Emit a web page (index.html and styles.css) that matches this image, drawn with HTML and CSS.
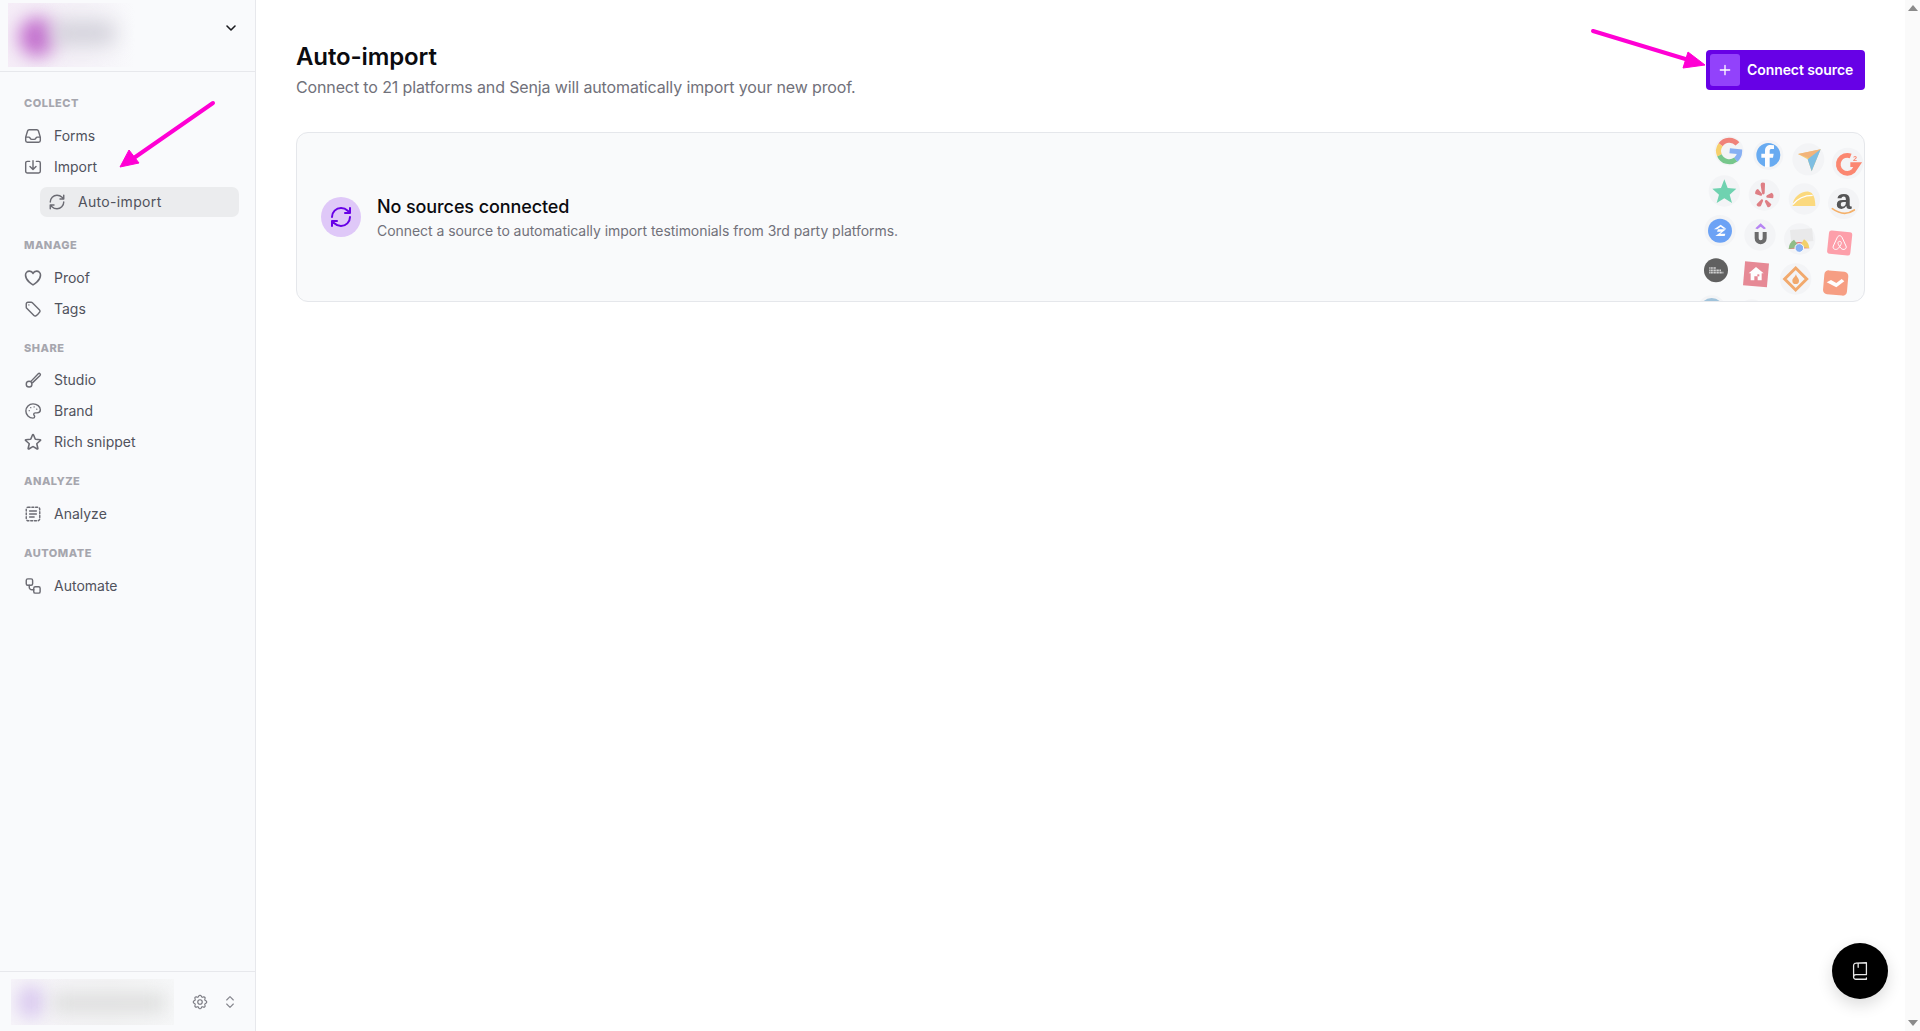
FILE: index.html
```html
<!DOCTYPE html>
<html lang="en">
<head>
<meta charset="utf-8">
<title>Auto-import</title>
<link rel="stylesheet" href="styles.css">
</head>
<body>
<svg class="defs" width="0" height="0" aria-hidden="true">
  <symbol id="i-inbox" viewBox="0 0 24 24"><path d="M2.25 13.5h3.86a2.25 2.25 0 012.012 1.244l.256.512a2.25 2.25 0 002.013 1.244h3.218a2.25 2.25 0 002.013-1.244l.256-.512a2.25 2.25 0 012.013-1.244h3.859m-19.5.338V18a2.25 2.25 0 002.25 2.25h15A2.25 2.25 0 0021.75 18v-4.162c0-.224-.034-.447-.1-.661L19.24 5.338a2.25 2.25 0 00-2.15-1.588H6.911a2.25 2.25 0 00-2.15 1.588L2.35 13.177a2.25 2.25 0 00-.1.661z"/></symbol>
  <symbol id="i-import" viewBox="0 0 24 24"><path d="M7.5 4.5H4.5A2.25 2.25 0 002.25 6.75v11A2.25 2.25 0 004.5 20h15a2.25 2.25 0 002.25-2.25v-11A2.25 2.25 0 0019.5 4.5h-3M12 3.5v11.5M8 11.2l4 4 4-4"/></symbol>
  <symbol id="i-refresh" viewBox="0 0 24 24"><path d="M3 12a9 9 0 0 1 9-9 9.75 9.75 0 0 1 6.74 2.74L21 8M21 3v5h-5M21 12a9 9 0 0 1-9 9 9.75 9.75 0 0 1-6.74-2.74L3 16M8 16H3v5"/></symbol>
  <symbol id="i-heart" viewBox="0 0 24 24"><path d="M21 8.25c0-2.485-2.099-4.5-4.688-4.5-1.935 0-3.597 1.126-4.312 2.733-.715-1.607-2.377-2.733-4.313-2.733C5.1 3.75 3 5.765 3 8.25c0 7.22 9 12 9 12s9-4.78 9-12z" transform="translate(-1.3 -1.3) scale(1.11)"/></symbol>
  <symbol id="i-tag" viewBox="0 0 24 24"><path d="M9.568 3H5.25A2.25 2.25 0 003 5.25v4.318c0 .597.237 1.17.659 1.591l9.581 9.581c.699.699 1.78.872 2.607.33a18.095 18.095 0 005.223-5.223c.542-.827.369-1.908-.33-2.607L11.16 3.66A2.25 2.25 0 009.568 3z"/><path d="M6.5 6.5h.01"/></symbol>
  <symbol id="i-brush" viewBox="0 0 24 24"><path d="M9.5 13.5L19 3.6a1.7 1.7 0 012.4 2.4L11.5 15.500"/><circle cx="6.800" cy="17.500" r="3.800"/></symbol>
  <symbol id="i-palette" viewBox="0 0 24 24"><path d="M12 2.500a9.500 9.500 0 000 19c1.400 0 2.200-1 2.200-2.100 0-.6-.2-1-.6-1.500-.4-.5-.6-.9-.6-1.400 0-1.200.9-2 2.100-2h2.400c2.500 0 4.300-1.700 4.300-4.100C21.800 6 17.500 2.500 12 2.500z"/><path d="M7 11.500h.01M9 7.500h.01M13.500 6.500h.01M17 9.500h.01"/></symbol>
  <symbol id="i-star" viewBox="0 0 24 24"><path d="M11.48 3.499a.562.562 0 011.04 0l2.125 5.111a.563.563 0 00.475.345l5.518.442c.499.04.701.663.321.988l-4.204 3.602a.563.563 0 00-.182.557l1.285 5.385a.562.562 0 01-.84.61l-4.725-2.885a.563.563 0 00-.586 0L6.982 20.54a.562.562 0 01-.84-.61l1.285-5.386a.562.562 0 00-.182-.557l-4.204-3.602a.563.563 0 01.321-.988l5.518-.442a.563.563 0 00.475-.345L11.48 3.5z" transform="translate(-1.3 -1.5) scale(1.11)"/></symbol>
  <symbol id="i-analyze" viewBox="0 0 24 24"><rect x="3" y="3" width="18" height="18" rx="2.500" stroke-dasharray="2.600 2.400"/><path d="M7.500 8h9M7.500 12h9M7.500 16h6"/></symbol>
  <symbol id="i-automate" viewBox="0 0 24 24"><rect x="3" y="2.500" width="8.500" height="8.500" rx="2"/><rect x="13" y="13" width="8.500" height="8.500" rx="2"/><path d="M7 11v2.500a3.500 3.500 0 003.500 3.500H13"/></symbol>
  <symbol id="i-gear" viewBox="0 0 24 24"><path d="M10.325 4.317c.426-1.756 2.924-1.756 3.35 0a1.724 1.724 0 002.573 1.066c1.543-.94 3.31.826 2.37 2.37a1.724 1.724 0 001.065 2.572c1.756.426 1.756 2.924 0 3.35a1.724 1.724 0 00-1.066 2.573c.94 1.543-.826 3.31-2.37 2.37a1.724 1.724 0 00-2.572 1.065c-.426 1.756-2.924 1.756-3.35 0a1.724 1.724 0 00-2.573-1.066c-1.543.94-3.31-.826-2.37-2.37a1.724 1.724 0 00-1.065-2.572c-1.756-.426-1.756-2.924 0-3.35a1.724 1.724 0 001.066-2.573c-.94-1.543.826-3.31 2.37-2.37.996.608 2.296.07 2.572-1.065z"/><circle cx="12" cy="12" r="3"/></symbol>
</svg>

<aside class="sidebar">
  <header class="workspace">
    <div class="blur-box blur-workspace"><span class="blur-dot"></span><span class="blur-bar"></span></div>
    <svg class="chevron" viewBox="0 0 24 24"><path d="M6 9l6 6 6-6"/></svg>
  </header>
  <nav class="nav">
    <section class="group">
      <h2 class="group-label">COLLECT</h2>
      <a class="row"><svg class="icon"><use href="#i-inbox"/></svg>Forms</a>
      <a class="row"><svg class="icon"><use href="#i-import"/></svg>Import</a>
      <a class="row row-sub"><svg class="icon"><use href="#i-refresh"/></svg>Auto-import</a>
    </section>
    <section class="group">
      <h2 class="group-label">MANAGE</h2>
      <a class="row"><svg class="icon"><use href="#i-heart"/></svg>Proof</a>
      <a class="row"><svg class="icon"><use href="#i-tag"/></svg>Tags</a>
    </section>
    <section class="group">
      <h2 class="group-label label-tight">SHARE</h2>
      <a class="row"><svg class="icon"><use href="#i-brush"/></svg>Studio</a>
      <a class="row"><svg class="icon"><use href="#i-palette"/></svg>Brand</a>
      <a class="row"><svg class="icon"><use href="#i-star"/></svg>Rich snippet</a>
    </section>
    <section class="group">
      <h2 class="group-label">ANALYZE</h2>
      <a class="row"><svg class="icon"><use href="#i-analyze"/></svg>Analyze</a>
    </section>
    <section class="group">
      <h2 class="group-label">AUTOMATE</h2>
      <a class="row"><svg class="icon"><use href="#i-automate"/></svg>Automate</a>
    </section>
  </nav>
  <footer class="account">
    <div class="blur-box blur-account"><span class="blur-dot-soft"></span><span class="blur-line"></span></div>
    <svg class="icon foot-gear"><use href="#i-gear"/></svg>
    <svg class="updown" viewBox="0 0 24 24"><path d="M7 9l5-5 5 5M7 15l5 5 5-5"/></svg>
  </footer>
</aside>

<main class="main">
  <div class="head">
    <div>
      <h1 class="title">Auto-import</h1>
      <p class="subtitle">Connect to 21 platforms and Senja will automatically import your new proof.</p>
    </div>
    <button class="cta"><span class="cta-plus"><svg viewBox="0 0 24 24"><path d="M12 5v14M5 12h14"/></svg></span>Connect source</button>
  </div>
  <section class="card">
    <span class="card-badge"><svg viewBox="0 0 24 24"><use href="#i-refresh"/></svg></span>
    <div class="card-body">
      <h2 class="card-title">No sources connected</h2>
      <p class="card-text">Connect a source to automatically import testimonials from 3rd party platforms.</p>
    </div>
    <svg class="logos" viewBox="60 39 522 504" aria-hidden="true">
      <g fill="#f3f4f6">
        <circle cx="177" cy="93" r="44"/><circle cx="295" cy="105" r="45"/><circle cx="415" cy="118" r="48"/><circle cx="533" cy="130" r="47"/>
        <circle cx="163" cy="213" r="47"/><circle cx="283" cy="225" r="47"/><circle cx="403" cy="237" r="47"/><circle cx="521" cy="250" r="47"/>
        <circle cx="150" cy="332" r="47"/><circle cx="270" cy="345" r="47"/><circle cx="389" cy="357" r="47"/>
        <circle cx="377" cy="477" r="47"/><circle cx="125" cy="570" r="44"/><circle cx="245" cy="582" r="44"/>
      </g>
      <g class="logo-art">
        <g fill="none" stroke-width="15" transform="rotate(6 177 93)">
          <path d="M200 69a32 32 0 00-50 8" stroke="#ef6a5e"/><path d="M150 77a32 32 0 000 32" stroke="#f8c94e"/><path d="M150 109a32 32 0 0050 7" stroke="#5cbd74"/><path d="M179 92h30a32 32 0 01-9 25" stroke="#6fa1f2"/>
        </g>
        <circle cx="295" cy="105" r="36" fill="#4a9bef"/>
        <path d="M299 141v-28h10l2-12h-12v-8c0-4 2-6 6-6h7V76l-10-1c-10 0-17 6-17 17v9h-11v12h11v28z" fill="#fff"/>
        <path d="M384 102l68-14-27 66-12-36z" fill="#f4c65d"/><path d="M384 102l41 16 27-30z" fill="#f2a65f"/><path d="M413 118l39-30-27 66z" fill="#64b3dd"/>
        <path d="M542 108A27 27 0 1 0 550 153L563 134H541" fill="none" stroke="#fd6f53" stroke-width="14"/>
        <text class="g2-sup" x="549" y="122">2</text>
        <path d="M163 178l10 26 26 2-20 18 7 25-23-14-23 14 7-25-20-18 26-2z" fill="#52cba0"/>
        <g fill="#d9646b"><path d="M281 188c-8-1-9 3-9 8l4 24c1 5 8 4 8-1l1-27c0-3-1-4-4-4z"/><path d="M256 222l16 5c5 1 6-4 3-7l-11-13c-5 0-10 9-8 15z"/><path d="M262 258c4 3 9 2 11-1l6-14c2-4-3-7-6-4l-12 12c-2 2-1 5 1 7z"/><path d="M295 262c5 0 8-5 9-9l-13-12c-4-3-8 1-6 5l7 14c1 1 2 2 3 2z"/><path d="M310 232c2-7-1-12-5-14l-14 8c-4 3-2 8 2 7l15 2c1 0 2-1 2-3z"/></g>
        <path d="M368 258c0-27 27-45 48-43 14 1 20 20 20 43z" fill="#fdd463"/>
        <path d="M368 254c14-18 36-28 60-28" fill="none" stroke="#fff" stroke-width="4"/>
        <text class="amazon" x="521" y="268">a</text>
        <path d="M487 266c22 16 46 18 66 4" fill="none" stroke="#f5a24b" stroke-width="5" stroke-linecap="round"/>
        <circle cx="150" cy="332" r="36" fill="#4f91f5"/>
        <path d="M132 328l20-14 17 12-9 0-8-6-10 8zM136 348l18-13h-13l3-7h24l-17 13h15l-2 7z" fill="#fff"/>
        <path d="M256 325l16-15 16 15-6 3-10-8-10 8z" fill="#a96cf2"/>
        <path d="M254 336v19a18 18 0 0036 0v-19h-12v19a6 6 0 01-12 0v-19z" fill="#4d4d4d"/>
        <path d="M360 330l66-5 4 38-66 6z" fill="#e7e7e7"/>
        <path d="M356 387a34 34 0 0162-2z" fill="#e36159"/><path d="M356 387a34 34 0 0116-28l16 22z" fill="#79b06f"/><path d="M418 385a34 34 0 00-16-27l-14 22z" fill="#f2c94e"/><circle cx="388" cy="384" r="13" fill="#6fa1f2" stroke="#fff" stroke-width="3"/>
        <rect x="474" y="334" width="70" height="70" rx="8" fill="#fe8b98" transform="rotate(6 509 369)"/>
        <path d="M509 347c-4 0-6 3-8 7l-11 24c-4 9 8 14 15 7l4-5 4 5c7 7 19 2 15-7l-11-24c-2-4-4-7-8-7zM509 364c-5 0-6 5-4 9l4 7 4-7c2-4 1-9-4-9z" fill="none" stroke="#fff" stroke-width="3"/>
        <circle cx="138" cy="451" r="36" fill="#3f3f3f"/>
        <path d="M118 444h20M118 451h36M118 458h42" stroke="#e4e4e4" stroke-width="5" stroke-dasharray="3 1.500"/>
        <rect x="222" y="427" width="72" height="72" fill="#e2717f" transform="rotate(5 258 463)"/>
        <path d="M258 441l23 19h-6v21h-12v-12h-10v12h-11v-21h-6z" fill="#fff"/><path d="M262 463h6v6h-6z" fill="#e2717f"/>
        <path d="M377 444l33 33-33 33-33-33z" fill="none" stroke="#f1994f" stroke-width="9"/>
        <path d="M378 462c1 9 9 12 9 20a10 10 0 01-20 0c0-8 9-11 11-20z" fill="#f1994f"/>
        <rect x="461" y="453" width="72" height="72" rx="13" fill="#f68a68" transform="rotate(5 497 489)"/>
        <path d="M470 487l13-7 16 9 16-12 8 7-24 18z" fill="#fff"/>
        <circle cx="125" cy="570" r="36" fill="#8fb9d6"/>
      </g>
    </svg>
  </section>
</main>

<div class="scrolltrack"><span class="tri-up"></span><span class="tri-down"></span></div>

<button class="fab" aria-label="Help"><svg viewBox="0 0 24 24"><path d="M5 18.500V6a2.500 2.500 0 012.500-2.500L19 3v13H7.500a2.500 2.500 0 00-2.500 2.500 2.500 2.500 0 002.500 2.500H19v-1.500M10 3.500V8"/></svg></button>

<svg class="annotations" viewBox="0 0 1920 1031" aria-hidden="true">
  <path class="arrow-line" d="M213 103L131 160"/>
  <path class="arrow-head" d="M120 167L129 150L139 163z"/>
  <path class="arrow-line" d="M1593 31L1692 61"/>
  <path class="arrow-head" d="M1705 65L1688 52L1683 68z"/>
</svg>
</body>
</html>
```

FILE: styles.css
```css
* { box-sizing: border-box; }
html, body { margin: 0; height: 1031px; overflow: hidden; }
body {
  display: flex;
  position: relative;
  font-family: Inter, "Liberation Sans", sans-serif;
  color: #4b5563;
  background: #fff;
}
h1, h2, p { margin: 0; }
.defs { position: absolute; }

.icon {
  width: 18px; height: 18px;
  fill: none; stroke: #6b6b73; stroke-width: 1.9;
  stroke-linecap: round; stroke-linejoin: round;
  flex: none;
}

.sidebar {
  width: 256px; flex: none;
  display: flex; flex-direction: column;
  background: #f9fafc;
  border-right: 1px solid #e7e8ec;
}
.workspace {
  height: 72px; flex: none;
  display: flex; align-items: flex-start; justify-content: space-between;
  padding: 3px 16px 0 8px;
  border-bottom: 1px solid #e7e8ec;
}
.blur-box { overflow: hidden; position: relative; flex: none; }
.blur-workspace { width: 127px; height: 64px; background: linear-gradient(90deg, #f5edf7, #f5f2f8 60%, #f9fafc); }
.blur-dot {
  position: absolute; left: 11px; top: 14px;
  width: 36px; height: 40px; border-radius: 50%;
  background: #c36fce; filter: blur(9px);
}
.blur-bar {
  position: absolute; left: 42px; top: 18px;
  width: 66px; height: 24px; border-radius: 10px;
  background: #d2d1da; filter: blur(10px);
}
.chevron {
  width: 16px; height: 16px; margin-top: 17px;
  fill: none; stroke: #1b1b1f; stroke-width: 2.400;
  stroke-linecap: round; stroke-linejoin: round;
}

.nav { flex: 1; padding: 21px 16px 0 24px; }
.group { padding-bottom: 14px; }
.group-label {
  font-size: 11px; font-weight: 800; line-height: 20px;
  letter-spacing: .5px; color: #a6a6ae;
  margin-bottom: 7px;
}
.label-tight { margin-bottom: 6px; }
.row {
  display: flex; align-items: center; gap: 12px;
  height: 31px;
  font-size: 14px; line-height: 20px; color: #50525c;
}
.row-sub {
  height: 30px; margin: 5px 0 4px 16px;
  padding-left: 8px; gap: 12px;
  border-radius: 7px; background: #ebecee;
  letter-spacing: .33px;
}

.account {
  height: 60px; flex: none;
  display: flex; align-items: center;
  padding: 0 17px 0 11px;
  border-top: 1px solid #e7e8ec;
}
.blur-account { width: 163px; height: 46px; background: linear-gradient(90deg, #f6f4f9, #f3f3f4 60%, #f6f7f8); }
.blur-dot-soft {
  position: absolute; left: 6px; top: 6px;
  width: 28px; height: 34px; border-radius: 50%;
  background: #dccdf0; filter: blur(8px);
}
.blur-line {
  position: absolute; left: 42px; top: 15px;
  width: 112px; height: 18px;
  background: #dcdddc; filter: blur(9px);
}
.foot-gear { margin-left: 17px; stroke: #77777f; stroke-width: 1.5; }
.updown {
  width: 16px; height: 16px; margin-left: 13px;
  fill: none; stroke: #85858d; stroke-width: 1.700;
  stroke-linecap: round; stroke-linejoin: round;
}

.main { flex: 1; min-width: 0; padding: 40px 40px 0; }
.head { display: flex; justify-content: space-between; align-items: flex-start; }
.title { font-size: 24px; font-weight: 600; line-height: 32px; color: #0b0b0f; letter-spacing: -.12px; padding-top: 1px; }
.subtitle { font-size: 16px; line-height: 24px; margin-top: 2px; color: #71717a; letter-spacing: -.13px; }
.cta {
  display: flex; align-items: center; gap: 7px;
  width: 159px; height: 40px; margin-top: 10px; padding: 0 4px;
  border: 0; border-radius: 4px;
  background: #6701e6; color: #fff;
  font: 600 14px/20px Inter, "Liberation Sans", sans-serif;
  letter-spacing: -.08px;
  white-space: nowrap;
}
.cta-plus {
  width: 30px; height: 32px; flex: none;
  display: flex; align-items: center; justify-content: center;
  border-radius: 3px; background: #9242fb;
}
.cta-plus svg { width: 16px; height: 16px; fill: none; stroke: #fff; stroke-width: 2; stroke-linecap: round; }

.card {
  position: relative; overflow: hidden;
  display: flex; align-items: center; gap: 16px;
  height: 170px; margin-top: 33px; padding: 0 24px;
  border: 1px solid #e5e7eb; border-radius: 12px;
  background: #f9fafb;
}
.card-badge {
  width: 40px; height: 40px; flex: none;
  display: flex; align-items: center; justify-content: center;
  border-radius: 50%; background: #dfc8f8;
}
.card-badge svg {
  width: 24px; height: 24px;
  fill: none; stroke: #6701e6; stroke-width: 2;
  stroke-linecap: round; stroke-linejoin: round;
}
.card-body { padding-top: 2px; }
.card-title { font-size: 18px; font-weight: 500; line-height: 24px; color: #0b0b0f; letter-spacing: -.1px; }
.card-text { font-size: 14px; line-height: 20px; margin-top: 2px; color: #71717a; letter-spacing: -.05px; }
.logos { position: absolute; right: 0; top: 0; width: 174px; height: 168px; }
.logo-art { opacity: .82; }
.g2-sup { font: 700 22px "Liberation Sans", sans-serif; fill: #fd6f53; }
.amazon { font: 700 84px "Liberation Sans", sans-serif; fill: #333; text-anchor: middle; }

.scrolltrack {
  width: 15px; flex: none;
  display: flex; flex-direction: column; justify-content: space-between; align-items: center;
  padding: 5px 0;
  background: #fafafa;
}
.tri-up, .tri-down { width: 0; height: 0; border-left: 5px solid transparent; border-right: 5px solid transparent; }
.tri-up { border-bottom: 6px solid #8a8a8a; }
.tri-down { border-top: 6px solid #8a8a8a; }

.fab {
  position: absolute; left: 1832px; top: 943px;
  width: 56px; height: 56px; padding: 0;
  display: flex; align-items: center; justify-content: center;
  border: 0; border-radius: 50%;
  background: #000;
  box-shadow: 0 6px 16px rgba(0,0,0,.14);
}
.fab svg {
  width: 22px; height: 22px;
  fill: none; stroke: #e8e8e8; stroke-width: 1.400;
  stroke-linecap: round; stroke-linejoin: round;
}

.annotations { position: absolute; left: 0; top: 0; width: 1920px; height: 1031px; pointer-events: none; }
.arrow-line { fill: none; stroke: #ff00d4; stroke-width: 4; stroke-linecap: round; }
.arrow-head { fill: #ff00d4; stroke: #ff00d4; stroke-width: 1; stroke-linejoin: round; }
```
